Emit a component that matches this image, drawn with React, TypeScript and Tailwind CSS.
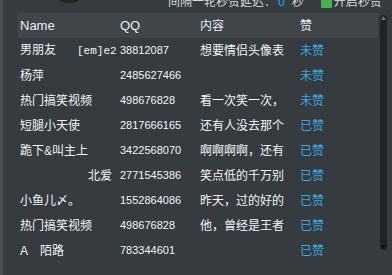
import React from 'react';

type Row = {
  name: React.ReactNode;
  qq: string;
  text: string;
  liked: boolean;
};

const rows: Row[] = [
  {
    name: (
      <>
        男朋友<span className="ml-[21px] font-['Liberation_Mono',monospace] text-[11px]">[em]e2</span>
      </>
    ),
    qq: '38812087',
    text: '想要情侣头像表',
    liked: false,
  },
  { name: '杨萍', qq: '2485627466', text: '', liked: false },
  { name: '热门搞笑视频', qq: '498676828', text: '看一次笑一次，', liked: false },
  { name: '短腿小天使', qq: '2817666165', text: '还有人没去那个', liked: true },
  { name: '跪下&叫主上', qq: '3422568070', text: '啊啊啊啊，还有', liked: true },
  { name: <span className="ml-[68px]">北爱</span>, qq: '2771545386', text: '笑点低的千万别', liked: true },
  { name: '小鱼儿〆。', qq: '1552864086', text: '昨天，过的好的', liked: true },
  { name: '热门搞笑视频', qq: '498676828', text: '他，曾经是王者', liked: true },
  {
    name: (
      <>
        A<span className="ml-[12px]">陌路</span>
      </>
    ),
    qq: '783344601',
    text: '',
    liked: true,
  },
];

export default function App() {
  return (
    <div className="relative flex h-[275px] w-[392px] overflow-hidden bg-[#363b3f] font-['Liberation_Sans','Noto_Sans_CJK_SC',sans-serif] text-[12px] text-[#f2f4f5]">
      {/* left edge */}
      <div className="w-[3px] shrink-0 bg-[#4a4f53]" />

      <div className="flex w-[389px] shrink-0 flex-col">
        {/* top strip, mostly scrolled off */}
        <div className="flex h-[13px] shrink-0 overflow-hidden">
          <div className="ml-[47px] -mt-[34px] h-[37px] w-[38px] shrink-0 rounded-full bg-[#1c2823]" />
          <div className="ml-[80px] -mt-[9px] flex items-center whitespace-nowrap text-[12px] leading-[14px] text-[#d5d9db]">
            <span>间隔一轮秒赞延迟：</span>
            <span className="ml-[2px] text-[#3aa7e3]">0</span>
            <span className="ml-[7px]">秒</span>
            <span className="ml-[17px] h-[11px] w-[11px] rounded-[1px] bg-[#4caf50]" />
            <span className="ml-[2px]">开启秒赞</span>
          </div>
        </div>

        <div className="flex items-start">
          {/* table */}
          <div className="ml-[15px] w-[360px] shrink-0">
            <div className="flex h-[25px] items-center bg-[#3f4549] text-[#e8eef2]">
              <div className="w-[100px] px-[2px] text-[13px]">Name</div>
              <div className="w-[80px] px-[2px] text-[13px]">QQ</div>
              <div className="w-[100px] px-[2px]">内容</div>
              <div className="w-[80px] px-[2px]">赞</div>
            </div>
            {rows.map((r, i) => (
              <div key={i} className="flex h-[25px] items-center">
                <div className="w-[100px] overflow-hidden whitespace-nowrap px-[2px]">{r.name}</div>
                <div className="w-[80px] px-[2px] text-[11px]">{r.qq}</div>
                <div className="w-[100px] overflow-hidden whitespace-nowrap px-[2px]">{r.text}</div>
                <div className="w-[80px] px-[2px] text-[#3aa7e3]">{r.liked ? '已赞' : '未赞'}</div>
              </div>
            ))}
          </div>

          {/* scrollbar */}
          <div className="ml-[2px] mt-[2px] flex h-[235px] w-[7px] shrink-0 flex-col items-center justify-between rounded-full bg-[#1f2326] py-[1px]">
            <div className="h-[4px] w-[5px] bg-[#6a7074] [clip-path:polygon(50%_0,100%_100%,0_100%)]" />
            <div className="h-[4px] w-[5px] bg-[#0c0d0e] [clip-path:polygon(0_0,100%_0,50%_100%)]" />
          </div>
        </div>
      </div>
    </div>
  );
}
